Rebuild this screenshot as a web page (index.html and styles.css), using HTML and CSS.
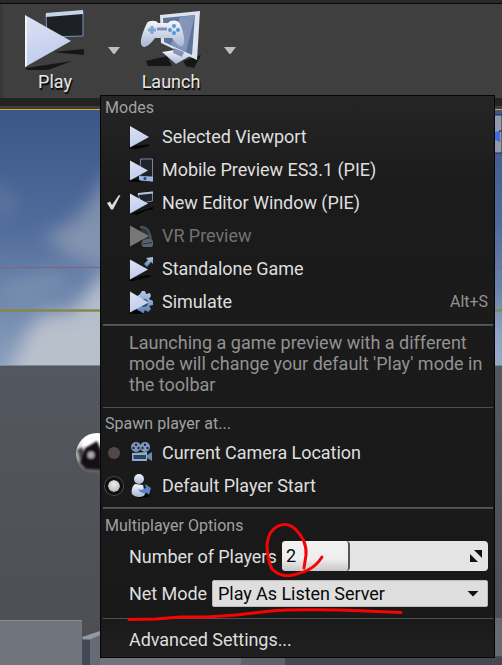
FILE: index.html
```html
<!DOCTYPE html>
<html lang="en">
<head>
<meta charset="utf-8">
<title>Play options</title>
<link rel="stylesheet" href="styles.css">
</head>
<body>
<svg class="defs" width="0" height="0" aria-hidden="true">
  <defs>
    <linearGradient id="blade" x1="0" y1="0" x2="0.3" y2="1"><stop offset="0" stop-color="#dde3f3"/><stop offset="1" stop-color="#bfccec"/></linearGradient>
    <linearGradient id="steel" x1="0" y1="0" x2="0" y2="1"><stop offset="0" stop-color="#b4c9ec"/><stop offset="1" stop-color="#5a7db4"/></linearGradient>
    <linearGradient id="white" x1="0" y1="0" x2="0" y2="1"><stop offset="0" stop-color="#f4f7fc"/><stop offset="1" stop-color="#a9b6d3"/></linearGradient>
    <filter id="soft" x="-20%" y="-50%" width="140%" height="200%"><feGaussianBlur stdDeviation="0.7"/></filter>
    <symbol id="tri" viewBox="0 0 24 24"><path d="M0 21L20 19.500L20 21L7 24L0 24Z" fill="#050505"/><path d="M1 1L20 12L1 22.500Z" fill="url(#blade)"/></symbol>
  </defs>
</svg>
<div class="editor">
  <header class="toolbar">
    <div class="tool play">
      <svg width="62" height="62" viewBox="0 0 62 62">
        <g filter="url(#soft)"><path d="M2 59L48 52L24 61L3 61Z M30 43L60 40L60 46L38 44Z" fill="#161616"/></g>
        <path d="M22 5L59 2V27L23 28Z" fill="#1d2024" stroke="#7894bd"/>
        <path d="M22 4L59 1V5L22 8Z" fill="#c5d3eb"/>
        <path d="M1 6L47 32L1 58Z" fill="url(#blade)"/>
        <path d="M1 6V58L3 57V9Z" fill="#eff2fa"/>
      </svg>
      <span>Play</span>
    </div>
    <i class="caret"></i>
    <div class="tool launch">
      <svg width="62" height="62" viewBox="0 0 62 62">
        <g filter="url(#soft)"><path d="M6 52L27 47L32 57L8 57Z M43 52L61 46L54 59L46 57Z" fill="#151515"/></g>
        <path d="M20 6L60 2L57 51L21 34Z" fill="#dde4f0"/><path d="M23 9L55 6L52 46L24 33Z" fill="#5f749d"/><path d="M55 6L46 43L31 36L40 8Z" fill="#8495b8"/>
        <path d="M22 43L35 41L50 47L36 55Z" fill="url(#white)"/><path d="M34 39L44 43L42 48L33 44Z" fill="#8394b7"/>
        <path d="M7 14C9 11 17 11 18 14H28C31 10 39 11 40 15C43 22 45 30 44 34C42 40 38 37 32 29H15C9 37 3 41 1 35C0 30 4 20 7 14Z" fill="url(#white)"/>
        <path d="M8 21h8M12 17v8" stroke="#7fa5d5" stroke-width="3"/><path d="M17 20h10" stroke="#7f91ba" stroke-width="3"/>
        <g fill="#5795d4"><circle cx="34" cy="17" r="2"/><circle cx="34" cy="24" r="2"/><circle cx="30" cy="21" r="2"/><circle cx="38" cy="21" r="2"/></g>
      </svg>
      <span>Launch</span>
    </div>
    <i class="caret"></i>
  </header>
  <div class="gutter"></div>
  <svg class="viewport" width="502" height="555" viewBox="0 110 502 555">
    <defs>
      <linearGradient id="sky" x1="0" y1="0" x2="0" y2="1"><stop offset="0" stop-color="#3b5789"/><stop offset=".45" stop-color="#506c9b"/><stop offset="1" stop-color="#8ba0bd"/></linearGradient>
      <linearGradient id="wall" x1="0" y1="0" x2="0" y2="1"><stop offset="0" stop-color="#53575f"/><stop offset="1" stop-color="#4d4e52"/></linearGradient>
      <radialGradient id="ball" cx=".45" cy=".2" r=".8"><stop offset=".3" stop-color="#fff"/><stop offset=".6" stop-color="#ccc"/><stop offset=".95" stop-color="#555"/></radialGradient>
      <filter id="cloud" x="-50%" y="-50%" width="200%" height="200%"><feGaussianBlur stdDeviation="9"/></filter>
      <filter id="spot"><feGaussianBlur stdDeviation="1.200"/></filter>
      <clipPath id="air"><path d="M0 110H502V365H0Z"/></clipPath>
    </defs>
    <path d="M0 110H502V366H0Z" fill="url(#sky)"/>
    <g clip-path="url(#air)"><g filter="url(#cloud)">
      <path d="M125 150L95 195L75 220L45 236L70 258L125 270Z" fill="#939fb7" opacity=".72"/>
      <path d="M5 385L25 335L42 315L72 312L90 290L103 272L130 280V385Z" fill="#bfc4ce" opacity=".9"/>
      <path d="M485 340L502 300V370H485Z" fill="#9fb2ce"/>
      <path d="M-15 175L20 205L0 220Z" fill="#7587a8" opacity=".5"/>
      <path d="M0 285L55 270L70 285L10 302Z" fill="#8c9bb5" opacity=".5"/>
    </g></g>
    <path d="M0 267.500H502" stroke="#79698a" stroke-width="1.500"/>
    <path d="M0 310.500H502" stroke="#83894c" stroke-width="2.500"/>
    <path d="M0 366H502V665H0Z" fill="url(#wall)"/><path d="M0 365.500H502" stroke="#7c8797"/>
    <path d="M0 620.500H82V665H0Z" fill="#70747c"/><path d="M0 620.500H82" stroke="#868a91"/>
    <path d="M82 638L90 639V665H82Z" fill="#414753"/><path d="M90 638L100 634V665H90Z" fill="#666a72"/><path d="M82 637L100 631V635L90 639.500H83Z" fill="#9299a4"/>
    <path d="M100 657H241V665H100Z" fill="#71747c"/><path d="M241 657H285V665H241Z" fill="#5e626c"/><path d="M285 657H502V665H285Z" fill="#454850"/>
    <path d="M494 618H502V656H494Z" fill="#666971"/>
    <circle cx="97" cy="454" r="21" fill="url(#ball)"/>
    <g filter="url(#spot)"><path d="M77 450L82 447L86 457L81 462Z" fill="#444"/><path d="M85 448L92 444L97 441L101 450V470L86 469L80 463Z" fill="#150c17"/><circle cx="91" cy="455" r="3.500" fill="#aaa"/></g>
    <path d="M494 115H502V153H494Z" fill="#9299ad" stroke="#252b3e"/><path d="M495 132L500 131V142L495 140Z" fill="#416cdd"/><path d="M499 131H502" stroke="#222"/>
  </svg>
</div>

<div class="menu">
  <h2>Modes</h2>
  <div class="row"><b></b><svg class="ic" viewBox="0 0 24 24"><use href="#tri"/></svg><span>Selected Viewport</span></div>
  <div class="row"><b></b><svg class="ic" viewBox="0 0 24 24"><path d="M11.500 1H23.500V23L11 22Z" fill="#202327" stroke="#7087aa"/><path d="M10 18L24 18.500V23.500L10 22Z" fill="#94b5e7"/><circle cx="16" cy="20.500" r="1.500" fill="#2a4267"/><path d="M0 21H9L12 24H0Z" fill="#050505"/><path d="M1 2.500L19 12.500L1 22.500Z" fill="url(#blade)"/></svg><span>Mobile Preview ES3.1 (PIE)</span></div>
  <div class="row"><b><svg width="16" height="17" viewBox="0 0 16 17"><path d="M1 9L4 7.500L6 11L12.500 1.500L14.500 1L7 15.500L5 15.500Z" fill="#dedede"/></svg></b><svg class="ic" viewBox="0 0 24 24"><path d="M9 3L23.500 1V10L12 12Z" fill="#202327" stroke="#6c86ab"/><path d="M9 2L24 .5V2.500L9 4Z" fill="#b4c6e5"/><path d="M2 23L24 16V18L16 20L8 24Z" fill="#050505"/><path d="M1 2.500L19 12.500L1 22.500Z" fill="url(#blade)"/></svg><span>New Editor Window (PIE)</span></div>
  <div class="row off"><b></b><svg class="ic" viewBox="0 0 24 24"><path d="M11 3C18 2 21 8 22 15L14 17Z" fill="#30343c"/><path d="M11 3C18 2 21 8 22 15" stroke="#485062" stroke-width="2" fill="none"/><path d="M14 16L21 14.500C25 16 25 20 23 23H14L12 20Z" fill="#596170"/><path d="M13 20L23 18.500" stroke="#2b303a"/><path d="M1 1.500L20 12L1 22.500Z" fill="#777"/></svg><span>VR Preview</span></div>
  <div class="row"><b></b><svg class="ic" viewBox="0 0 24 24"><path d="M0 22L18 18L24 19L17 21L5 24H0Z" fill="#050505"/><path d="M17 1L24 0L24 7L22 5L18 10L15 7L19 3Z" fill="url(#steel)"/><path d="M1 2.500L19 12.500L1 22.500Z" fill="url(#blade)"/></svg><span>Standalone Game</span></div>
  <div class="row"><b></b><svg class="ic" viewBox="0 0 24 24"><path d="M11 4L13 1H16L17 4L21 3L22 6L20 9L24 11V15L20 16L22 19L19 22L16 20L14 24L11 21L8 22L7 7Z" fill="url(#steel)"/><circle cx="15" cy="13" r="4" fill="#315274"/><path d="M0 22L7 19L15 24H0Z" fill="#050505"/><path d="M1 1.500L19.500 12.500L1 22.500Z" fill="url(#blade)"/></svg><span>Simulate</span><kbd>Alt+S</kbd></div>
  <hr class="thick s1">
  <p>Launching a game preview with a different<br>mode will change your default 'Play' mode in<br>the toolbar</p>
  <hr class="s2">
  <h2>Spawn player at...</h2>
  <div class="row"><b><i class="radio"></i></b><svg class="ic" viewBox="0 0 24 24"><circle cx="7" cy="6" r="5" fill="#7f94b9"/><circle cx="16" cy="6" r="5" fill="#8198c0"/><g fill="#202b3f"><circle cx="7" cy="3.700" r="1.200"/><circle cx="4.500" cy="7" r="1.200"/><circle cx="9.500" cy="7" r="1.200"/><circle cx="16" cy="3.700" r="1.200"/><circle cx="13.500" cy="7" r="1.200"/><circle cx="18.500" cy="7" r="1.200"/></g><path d="M3 12L18 11V20L3 20Z" fill="#91aad2"/><path d="M4.500 14H17V18H4.500Z" fill="#30415c"/><path d="M18 14L23 11V20L18 17Z" fill="#6d87b0"/><circle cx="15" cy="13" r="1" fill="#42d66b"/></svg><span>Current Camera Location</span></div>
  <div class="row"><b><i class="radio on"></i></b><svg class="ic" viewBox="0 0 24 24"><path d="M7 21L22 18L20 23L10 24Z" fill="#050505"/><path d="M6 10C3 12 2 17 3 20C6 24 15 24 16 20L14 11Z" fill="url(#white)"/><circle cx="10" cy="5" r="5" fill="url(#white)"/><path d="M9 15C12 17 14 15 17 14L16 10L22 14L20 21L18 19C14 20 11 19 9 15Z" fill="#5984c9"/></svg><span>Default Player Start</span></div>
  <hr class="thick s3">
  <h2>Multiplayer Options</h2>
  <div class="field players"><label>Number of Players</label><div class="spin"><div class="fill">2</div><svg width="14" height="14" viewBox="0 0 14 14"><path d="M5 1H13V9Z M1 5V13H9Z" fill="#111"/><path d="M3 3L12 12" stroke="#e5e5e5" stroke-width="2"/></svg></div></div>
  <div class="field net"><label>Net Mode</label><div class="combo"><span>Play As Listen Server</span><i></i></div></div>
  <hr class="s4">
  <div class="row adv"><span>Advanced Settings...</span></div>
  <svg class="ink" width="394" height="562" viewBox="101 96 394 562"><g fill="none" stroke="#f80303" stroke-width="3" stroke-linecap="round" stroke-linejoin="round"><path d="M304 568L306 555C307 545 302 536 297 531C292 525 285 523 278 526C272 529 268 535 267 544C267 553 269 563 272 569C278 575 284 577 293 575C306 572 315 568 322 557"/><path d="M129 619.500L156 619L180 617L207 617L236 615L271 611C292 609 310 610 340 610L401 612.500"/></g></svg>
</div>
</body>
</html>
```

FILE: styles.css
```css
* { box-sizing: border-box; }
body { margin: 0; background: #3f3f3f; font-family: Roboto, "Liberation Sans", sans-serif; overflow: hidden; }
svg { display: block; flex: none; }
.defs { position: absolute; }
.editor { height: 665px; display: flex; flex-direction: column; }
.toolbar { height: 98px; flex: none; display: flex; background: #3f3f3f; border-top: 3px solid #292929; box-shadow: inset 0 1px #080808, inset 3px 0 #383838; padding-left: 24px; }
.tool { display: flex; flex-direction: column; width: 62px; padding-top: 6px; align-items: center; color: #e6e6e6; font-size: 18px; line-height: 21px; text-shadow: 1px 2px 1px #000; white-space: nowrap; }
.launch { margin-left: 20px; }
.caret { width: 12px; height: 7px; background: #bdbdbd; clip-path: polygon(0 0, 100% 0, 55% 100%, 45% 100%); margin: 44px 0 0 22px; }
.gutter { height: 12px; flex: none; background: linear-gradient(#232323 8px, #3d3d3d 8px); border-bottom: 1px solid #dda41c; }

.menu { position: absolute; left: 100px; top: 95px; width: 395px; height: 563px; background: linear-gradient(#252525, #1b1b1b 90px, #191919 520px, #202020); border: 1px solid #050505; display: flex; flex-direction: column; color: #dfdfdf; font-size: 18px; letter-spacing: -0.05px; }
h2 { margin: 0; padding-left: 4px; height: 24px; flex: none; font-size: 16px; letter-spacing: 0.03px; line-height: 24px; font-weight: 400; color: #a1a1a1; }
.row { height: 33px; flex: none; display: flex; align-items: center; white-space: nowrap; }
.row b { width: 28px; height: 24px; display: flex; align-items: center; padding-left: 5px; }
.ic { width: 24px; height: 24px; margin-right: 9px; }
.off { color: #727272; }
kbd { font: 16px Roboto, sans-serif; color: #929292; margin: 0 6px 0 auto; }
hr { border: 0; height: 1px; flex: none; background: #505050; margin: 0 1px 0 2px; }
.thick { height: 2px; background: linear-gradient(#5e5e5e, #454545); }
.s1 { margin-top: 6px; }
.s2 { margin-top: 12px; }
.s3 { margin-top: 5px; margin-bottom: 5px; }
.s4 { margin-top: 11px; }
.s2 + h2 { margin-top: 4px; }
p { margin: 6px 0 0 28px; line-height: 21px; color: #929292; white-space: nowrap; letter-spacing: 0; }
.radio { width: 12px; height: 12px; border-radius: 50%; background: #514949; margin-left: 2px; }
.radio.on { width: 18px; height: 18px; margin-left: -1px; border: 3px solid #111; background: radial-gradient(circle at 50% 35%, #eee, #aaa) padding-box; box-shadow: 0 0 0 1px #4b4b4b; }
.field { display: flex; align-items: center; flex: none; padding: 0 6px 0 28px; white-space: nowrap; color: #dfdfdf; }
.players { height: 30px; margin-top: 3px; }
.spin { width: 206px; height: 30px; margin-left: auto; display: flex; align-items: center; justify-content: space-between; padding-right: 5px; background: #e5e5e5; border-radius: 4px; color: #080808; }
.fill { width: 68px; height: 30px; line-height: 30px; padding-left: 4px; border-radius: 4px; border-right: 2px solid #555; background: linear-gradient(#f2f2f2, #eee 60%, #c7c7c7); }
.net { height: 27px; margin-top: 9px; }
.combo { width: 276px; height: 27px; margin-left: auto; padding: 0 8px 0 5px; display: flex; align-items: center; justify-content: space-between; background: #dedede; border-radius: 2px; border: 1px solid #bbb; color: #080808; }
.combo i { width: 12px; height: 6px; background: #111; clip-path: polygon(0 0, 100% 0, 50% 100%); }
.adv { padding-left: 28px; margin-top: 4px; }
.ink { position: absolute; left: 0; top: 0; pointer-events: none; }
```
